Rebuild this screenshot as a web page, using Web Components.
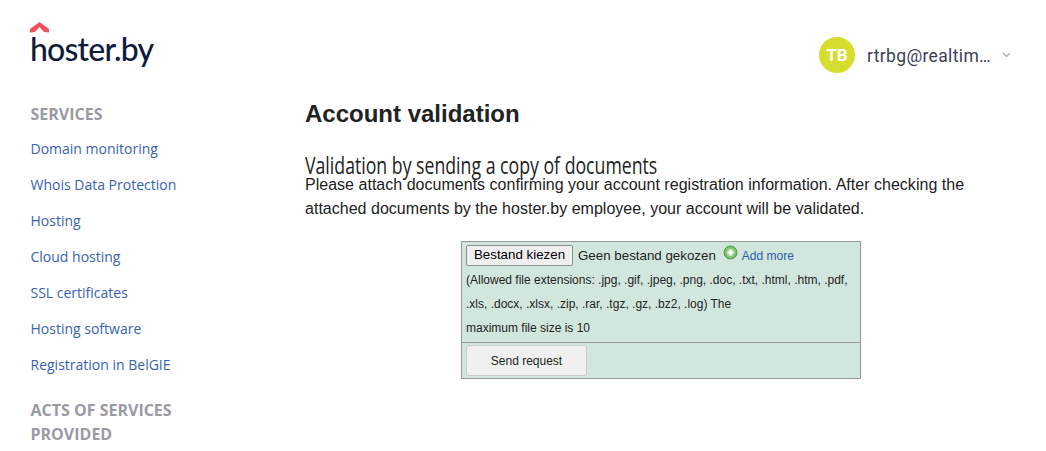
<!DOCTYPE html>
<html lang="en">
<head>
<meta charset="utf-8">
<title>Account validation</title>
<style>
  html, body { margin: 0; background: #fff; }
  body { font-family: "Open Sans", "Liberation Sans", sans-serif; }
</style>
</head>
<body>
<hoster-page>
  <hoster-logo slot="logo"></hoster-logo>
  <user-menu slot="user" initials="TB" email="rtrbg@realtim…"></user-menu>
  <side-nav slot="nav">
    <nav-group title="Services">
      <a href="#">Domain monitoring</a>
      <a href="#">Whois Data Protection</a>
      <a href="#">Hosting</a>
      <a href="#">Cloud hosting</a>
      <a href="#">SSL certificates</a>
      <a href="#">Hosting software</a>
      <a href="#">Registration in BelGIE</a>
    </nav-group>
    <nav-group title="Acts of services provided"></nav-group>
  </side-nav>
  <validation-panel>
    <upload-form></upload-form>
  </validation-panel>
</hoster-page>

<script>
class HosterPage extends HTMLElement {
  constructor() {
    super();
    this.attachShadow({ mode: "open" });
  }

  connectedCallback() {
    this.shadowRoot.innerHTML = `
      <style>
        :host {
          display: grid;
          grid-template-columns: 305px 712px;
          grid-template-rows: 96px auto;
          height: 451px;
          overflow: hidden;
        }
        .logo { padding: 22px 0 0 30px; }
        .user { display: flex; justify-content: flex-end; padding-top: 37px; }
      </style>
      <div class="logo"><slot name="logo"></slot></div>
      <div class="user"><slot name="user"></slot></div>
      <div><slot name="nav"></slot></div>
      <main><slot></slot></main>
    `;
  }
}

class HosterLogo extends HTMLElement {
  constructor() {
    super();
    this.attachShadow({ mode: "open" });
  }

  connectedCallback() {
    this.shadowRoot.innerHTML = `
      <style>
        :host { display: block; width: 130px; }
        svg { display: block; width: 19px; height: 11px; }
        span {
          display: block;
          font: 500 32px/31px Lato, sans-serif;
          letter-spacing: -0.8px;
          color: #0f1b3d;
        }
      </style>
      <svg viewBox="0 0 19 11"><path d="M0 7 9.500 0 19 7v3.500L14 10 9.500 5 5 10 0 10.500z" fill="#f2505f"/></svg>
      <span>hoster.by</span>
    `;
  }
}

class UserMenu extends HTMLElement {
  constructor() {
    super();
    this.attachShadow({ mode: "open" });
  }

  connectedCallback() {
    this.shadowRoot.innerHTML = `
      <style>
        :host {
          display: flex;
          align-items: center;
          height: 36px;
          font-family: Roboto, sans-serif;
        }
        .avatar {
          width: 36px;
          height: 36px;
          border-radius: 50%;
          background: #d5de2f;
          color: #fff;
          font: 700 17px/36px Roboto, sans-serif;
          text-align: center;
        }
        .email {
          width: 125px;
          margin: 2px 0 0 12px;
          font-size: 17.500px;
          letter-spacing: 0.350px;
          color: #3a3f55;
          white-space: nowrap;
        }
        svg { display: block; margin: 0 6px 0 10px; }
      </style>
      <div class="avatar">${this.getAttribute("initials")}</div>
      <div class="email">${this.getAttribute("email")}</div>
      <svg width="9" height="6" viewBox="0 0 9 6"><path d="M1 1l3.500 3.500L8 1" fill="none" stroke="#a9adb8" stroke-width="1.300"/></svg>
    `;
  }
}

class SideNav extends HTMLElement {
  constructor() {
    super();
    this.attachShadow({ mode: "open" });
  }

  connectedCallback() {
    this.shadowRoot.innerHTML = `
      <style>
        :host { display: block; padding: 6px 0 0 30.500px; width: 200px; }
      </style>
      <slot></slot>
    `;
  }
}

class NavGroup extends HTMLElement {
  constructor() {
    super();
    this.attachShadow({ mode: "open" });
  }

  connectedCallback() {
    this.shadowRoot.innerHTML = `
      <style>
        :host { display: block; margin-bottom: 21px; }
        h3 {
          margin: 0;
          font: 700 16px/24px "Open Sans", sans-serif;
          text-transform: uppercase;
          color: #9a9aa3;
        }
        .links { display: flex; flex-direction: column; margin-top: -1px; }
        ::slotted(a) {
          display: block;
          margin-top: 12px;
          font: 14px/24px "Open Sans", sans-serif;
          color: #3762b4;
          text-decoration: none;
        }
      </style>
      <h3>${this.getAttribute("title")}</h3>
      <div class="links"><slot></slot></div>
    `;
  }
}

class ValidationPanel extends HTMLElement {
  constructor() {
    super();
    this.attachShadow({ mode: "open" });
  }

  connectedCallback() {
    this.shadowRoot.innerHTML = `
      <style>
        :host {
          display: block;
          font-family: "Liberation Sans", Arial, sans-serif;
          color: #222;
        }
        h1 { margin: 0; padding-top: 2px; font: 700 24px/32px "Liberation Sans", Arial, sans-serif; }
        h2 {
          margin: 23px 0 0;
          height: 20px;
          font: 400 24px/24px "Open Sans", sans-serif;
          white-space: nowrap;
          transform: scaleX(0.737);
          transform-origin: left center;
        }
        p { margin: 0 0 20px; font-size: 16px; line-height: 24px; letter-spacing: 0.020px; }
      </style>
      <h1>Account validation</h1>
      <h2>Validation by sending a copy of documents</h2>
      <p>Please attach documents confirming your account registration information. After checking the attached documents by the hoster.by employee, your account will be validated.</p>
      <slot></slot>
    `;
  }
}

class UploadForm extends HTMLElement {
  constructor() {
    super();
    this.attachShadow({ mode: "open" });
  }

  connectedCallback() {
    this.shadowRoot.innerHTML = `
      <style>
        :host {
          display: block;
          box-sizing: border-box;
          width: 400px;
          margin: 0 auto;
          border: 1px solid #999;
          background: #d1e7dd;
          font: 12px/24px "Liberation Sans", Arial, sans-serif;
          color: #222;
        }
        .files { padding: 2px 4px 2px; border-bottom: 1px solid #999; }
        .pick { display: flex; align-items: center; height: 24px; font-size: 13.330px; }
        .pick button {
          box-sizing: border-box;
          width: 107px;
          height: 21px;
          margin: -2px 5px 0 0;
          padding: 0 0 2px;
          border: 1px solid #8f8f8f;
          border-radius: 2px;
          background: #efefef;
          font: inherit;
          line-height: 17px;
          color: #000;
        }
        .add { display: flex; align-items: center; margin-left: 7px; font-size: 12px; color: #2f5aa8; text-decoration: none; }
        .add svg { display: block; margin: -8px 4px 0 0; }
        .send { padding: 2px 4px 2px; }
        .send button {
          display: block;
          box-sizing: border-box;
          width: 121px;
          height: 31px;
          padding: 0;
          border: 1px solid #ccc;
          border-radius: 3px;
          background: #f0f0f0;
          font: 12px "Liberation Sans", Arial, sans-serif;
          color: #222;
        }
      </style>
      <div class="files">
        <div class="pick">
          <button type="button">Bestand kiezen</button>
          <span>Geen bestand gekozen</span>
          <a class="add" href="#">
            <svg width="15" height="15" viewBox="0 0 15 15">
              <circle cx="7.500" cy="7.500" r="6.500" fill="#7fbf6a" stroke="#4f9a45"/>
              <circle cx="7.500" cy="7.500" r="4" fill="#a5d596"/>
              <path d="M7.500 4.500v6M4.500 7.500h6" stroke="#fff" stroke-width="2"/>
            </svg>
            Add more
          </a>
        </div>
        <div>(Allowed file extensions: .jpg, .gif, .jpeg, .png, .doc, .txt, .html, .htm, .pdf, .xls, .docx, .xlsx, .zip, .rar, .tgz, .gz, .bz2, .log) The<br>maximum file size is 10</div>
      </div>
      <div class="send"><button type="button">Send request</button></div>
    `;
  }
}

customElements.define("hoster-page", HosterPage);
customElements.define("hoster-logo", HosterLogo);
customElements.define("user-menu", UserMenu);
customElements.define("side-nav", SideNav);
customElements.define("nav-group", NavGroup);
customElements.define("validation-panel", ValidationPanel);
customElements.define("upload-form", UploadForm);
</script>
</body>
</html>
